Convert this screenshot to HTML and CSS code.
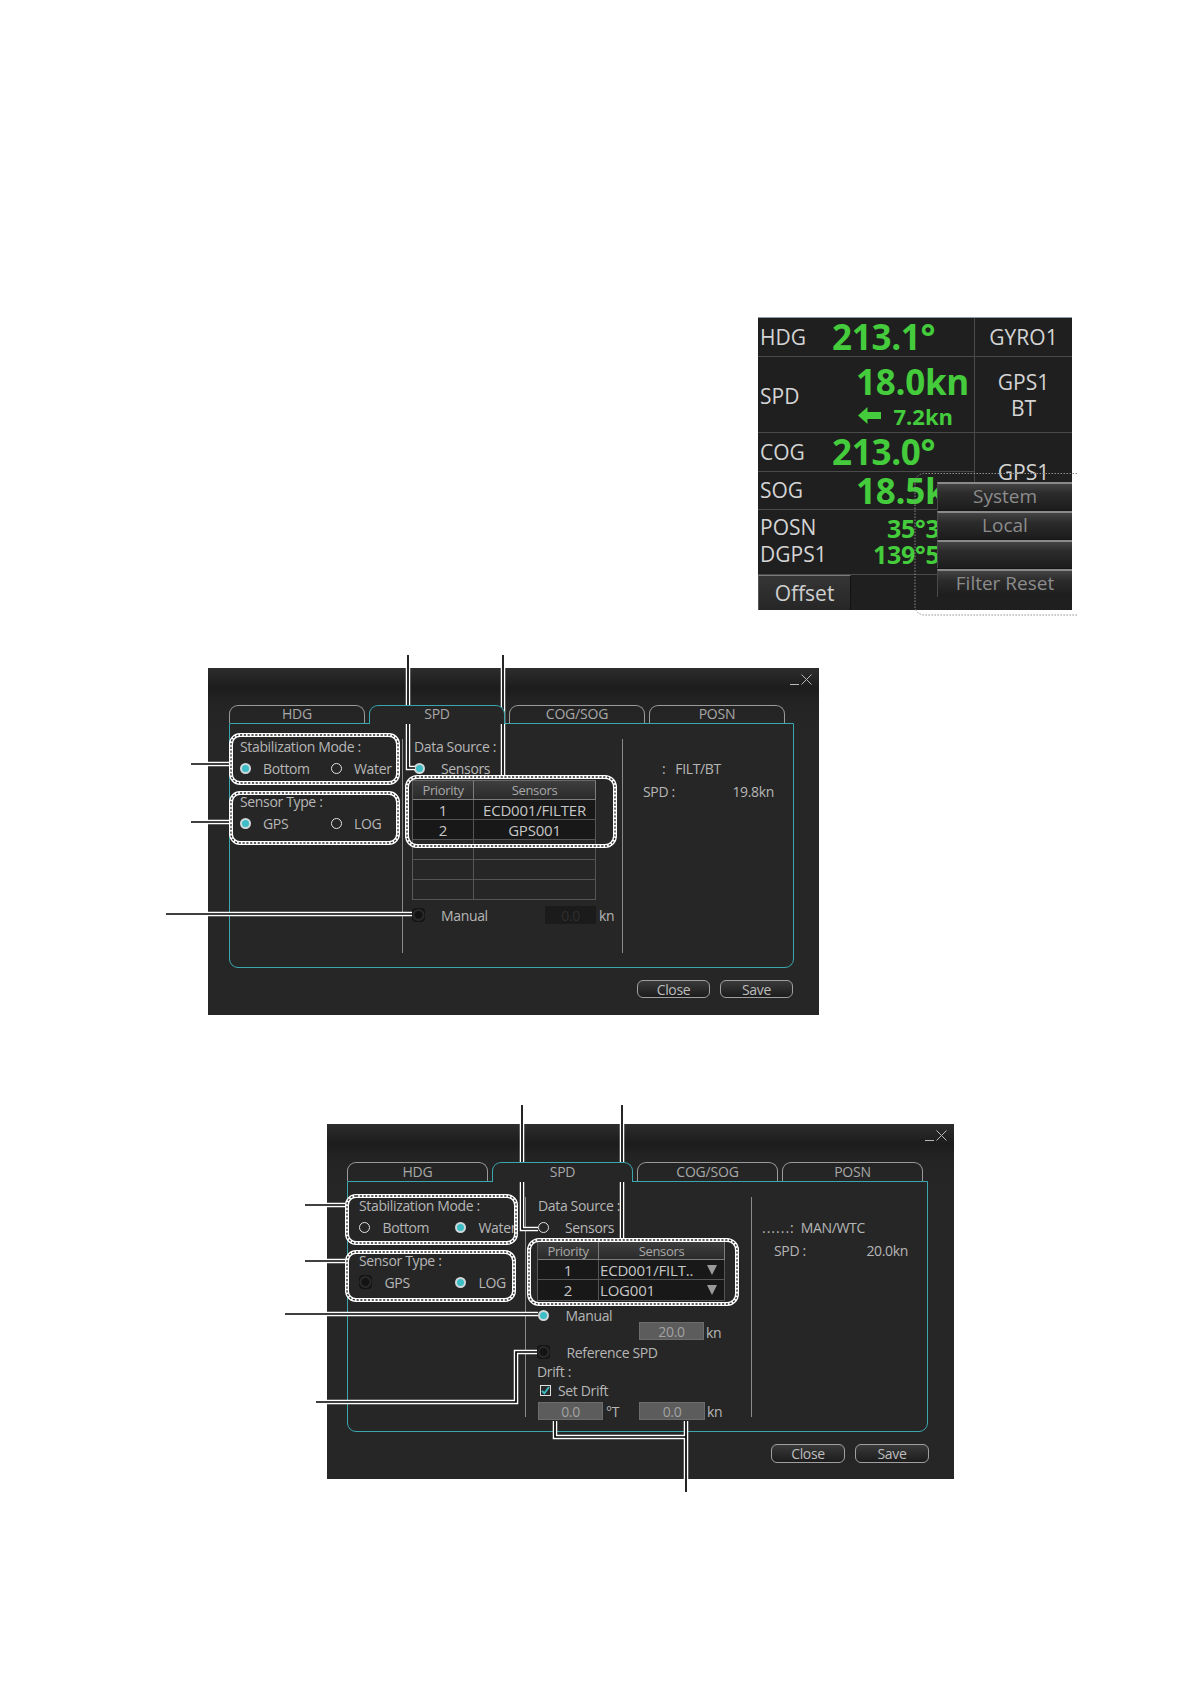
FILE: index.html
```html
<!DOCTYPE html>
<html lang="en">
<head>
<meta charset="utf-8">
<title>SPD settings</title>
<link rel="stylesheet" href="styles.css">
</head>
<body>
<div class="page">

  <div class="nav">
    <div class="c l hdg"><span class="k">HDG</span><span class="big">213.1°</span></div>
    <div class="c src">GYRO1</div>
    <div class="c l spd"><span class="k">SPD</span>
      <div class="vals"><span class="big">18.0kn</span>
        <span class="small"><svg class="arr" width="23" height="17" viewBox="0 0 23 17"><path d="M0 8.5 L9.5 0 L9.5 5 L23 5 L23 12 L9.5 12 L9.5 17 Z" fill="#44cc3c"/></svg>7.2kn</span>
      </div>
    </div>
    <div class="c src two">GPS1<br>BT</div>
    <div class="c l cog"><span class="k">COG</span><span class="big">213.0°</span></div>
    <div class="c src span2">GPS1</div>
    <div class="c l sog"><span class="k">SOG</span><span class="big">18.5kn</span></div>
    <div class="c l posn">
      <div class="ks"><span>POSN</span><span>DGPS1</span></div>
      <div class="pv"><span class="lat">35°35.1</span><span class="lon">139°59.4</span></div>
    </div>
    <div class="c src"></div>
    <div class="c off"><span class="offbtn">Offset</span></div>
    <div class="c off2"></div>
  </div>

  <div class="menu">
    <div class="mi">System</div>
    <div class="mi">Local</div>
    <div class="mi"></div>
    <div class="mi">Filter Reset</div>
  </div>

  <section class="dlg d1">
    <div class="bar"><span class="winctl"><span class="us"></span><svg width="11" height="11" viewBox="0 0 11 11"><path d="M0.5 0.5 L10.5 10.5 M10.5 0.5 L0.5 10.5" stroke="#b8b8b8" stroke-width="1"/></svg></span></div>
    <div class="tabs">
      <div class="tab">HDG</div>
      <div class="tab on">SPD</div>
      <div class="tab">COG/SOG</div>
      <div class="tab">POSN</div>
    </div>
    <div class="panel">
      <div class="col left">
        <div class="grp">
          <div class="ttl">Stabilization Mode :</div>
          <div class="opts"><span class="opt"><i class="rb on"></i>Bottom</span><span class="opt"><i class="rb"></i>Water</span></div>
        </div>
        <div class="grp">
          <div class="ttl">Sensor Type :</div>
          <div class="opts"><span class="opt"><i class="rb on"></i>GPS</span><span class="opt"><i class="rb"></i>LOG</span></div>
        </div>
      </div>
      <div class="col mid">
        <div class="ttl">Data Source :</div>
        <div class="opts"><span class="opt wide"><i class="rb on"></i>Sensors</span></div>
        <div class="tbl">
          <div class="th">Priority</div><div class="th">Sensors</div>
          <div class="td">1</div><div class="td">ECD001/FILTER</div>
          <div class="td">2</div><div class="td">GPS001</div>
          <div class="te"></div><div class="te"></div>
          <div class="te"></div><div class="te"></div>
          <div class="te"></div><div class="te"></div>
        </div>
        <div class="manual"><i class="rb dis"></i><span class="mlbl">Manual</span><span class="inp dark">0.0</span><span class="unit">kn</span></div>
      </div>
      <div class="col right">
        <div class="info r1"><span>:</span><span class="v">FILT/BT</span></div>
        <div class="info r2"><span>SPD :</span><span>19.8kn</span></div>
      </div>
    </div>
    <div class="btns"><span class="btn">Close</span><span class="btn">Save</span></div>
  </section>

  <section class="dlg d2">
    <div class="bar"><span class="winctl"><span class="us"></span><svg width="11" height="11" viewBox="0 0 11 11"><path d="M0.5 0.5 L10.5 10.5 M10.5 0.5 L0.5 10.5" stroke="#b8b8b8" stroke-width="1"/></svg></span></div>
    <div class="tabs">
      <div class="tab">HDG</div>
      <div class="tab on">SPD</div>
      <div class="tab">COG/SOG</div>
      <div class="tab">POSN</div>
    </div>
    <div class="panel">
      <div class="col left">
        <div class="grp">
          <div class="ttl">Stabilization Mode :</div>
          <div class="opts"><span class="opt"><i class="rb"></i>Bottom</span><span class="opt"><i class="rb on"></i>Water</span></div>
        </div>
        <div class="grp">
          <div class="ttl">Sensor Type :</div>
          <div class="opts"><span class="opt"><i class="rb dis"></i>GPS</span><span class="opt"><i class="rb on"></i>LOG</span></div>
        </div>
      </div>
      <div class="col mid">
        <div class="ttl">Data Source :</div>
        <div class="opts"><span class="opt wide"><i class="rb"></i>Sensors</span></div>
        <div class="tbl">
          <div class="th">Priority</div><div class="th">Sensors</div>
          <div class="td">1</div><div class="td sel"><span>ECD001/FILT..</span><i class="tri"></i></div>
          <div class="td">2</div><div class="td sel"><span>LOG001</span><i class="tri"></i></div>
        </div>
        <div class="manual"><i class="rb on"></i><span class="mlbl">Manual</span></div>
        <div class="spdrow"><span class="inp gray w65">20.0</span><span class="unit">kn</span></div>
        <div class="manual ref"><i class="rb dis"></i><span class="mlbl">Reference SPD</span></div>
        <div class="drift">Drift :</div>
        <div class="setdrift"><span class="cb"><svg width="9" height="9" viewBox="0 0 9 9"><path d="M1 4.8 L3.4 7.4 L8 1" stroke="#3dbdc6" stroke-width="1.8" fill="none"/></svg></span>Set Drift</div>
        <div class="driftvals"><span class="inp gray w65">0.0</span><span class="deg">°T</span><span class="inp gray w66">0.0</span><span class="unit">kn</span></div>
      </div>
      <div class="col right">
        <div class="info r1"><span class="dots">......:</span><span class="v">MAN/WTC</span></div>
        <div class="info r2"><span>SPD :</span><span>20.0kn</span></div>
      </div>
    </div>
    <div class="btns"><span class="btn">Close</span><span class="btn">Save</span></div>
  </section>

  <svg class="annot" width="1190" height="1684" viewBox="0 0 1190 1684">
    <path class="obox" d="M1077 473.5 H924 A9 9 0 0 0 915 482.5 V606 A9 9 0 0 0 924 615 H1077"/>
    <g class="dbox">
      <rect x="231" y="735" width="167" height="48" rx="9"/>
      <rect x="231" y="793" width="167" height="50" rx="9"/>
      <rect x="407" y="777" width="208" height="69" rx="10"/>
      <rect x="347" y="1196" width="169" height="47" rx="9"/>
      <rect x="347" y="1252" width="167" height="48" rx="9"/>
      <rect x="529" y="1240" width="208" height="64" rx="10"/>
    </g>
    <g class="dash">
      <rect x="231" y="735" width="167" height="48" rx="9"/>
      <rect x="231" y="793" width="167" height="50" rx="9"/>
      <rect x="407" y="777" width="208" height="69" rx="10"/>
      <rect x="347" y="1196" width="169" height="47" rx="9"/>
      <rect x="347" y="1252" width="167" height="48" rx="9"/>
      <rect x="529" y="1240" width="208" height="64" rx="10"/>
    </g>
    <g class="halo">
      <path d="M408 655 V768 H415"/>
      <path d="M503 655 V775"/>
      <path d="M191 764 H229"/>
      <path d="M191 822 H229"/>
      <path d="M166 914 H412"/>
      <path d="M522 1105 V1229 H538"/>
      <path d="M622 1105 V1238"/>
      <path d="M305 1205 H345"/>
      <path d="M305 1261 H345"/>
      <path d="M285 1314 H538"/>
      <path d="M316 1402 H516 V1352 H537"/>
      <path d="M555 1421 V1437 H686 M686 1421 V1492"/>
    </g>
    <g class="core">
      <path d="M408 655 V768 H415"/>
      <path d="M503 655 V775"/>
      <path d="M191 764 H229"/>
      <path d="M191 822 H229"/>
      <path d="M166 914 H412"/>
      <path d="M522 1105 V1229 H538"/>
      <path d="M622 1105 V1238"/>
      <path d="M305 1205 H345"/>
      <path d="M305 1261 H345"/>
      <path d="M285 1314 H538"/>
      <path d="M316 1402 H516 V1352 H537"/>
      <path d="M555 1421 V1437 H686 M686 1421 V1492"/>
    </g>
  </svg>
</div>
</body>
</html>
```

FILE: styles.css
```css
* { box-sizing: border-box; margin: 0; padding: 0; }
html, body { background: #fff; }
body { font-family: "Open Sans", "Liberation Sans", sans-serif; }

.page { position: relative; width: 1190px; height: 1684px; overflow: hidden; padding-top: 317px; }

/* ---------- top navigation panel ---------- */
.nav {
  margin-left: 758px;
  width: 314px;
  height: 293px;
  background: #1f1f1f;
  border-top: 1px solid #8d9cab;
  display: grid;
  grid-template-columns: 217px 97px;
  grid-template-rows: 39px 76px 39px 38px 65px 35px;
  color: #d4d4d4;
  font-size: 21px;
}
.c { border-bottom: 1px solid #4a4a4a; }
.c.l { border-right: 1px solid #4a4a4a; }
.k { line-height: 1; }
.big { font-weight: 700; color: #44cc3c; font-size: 35px; line-height: 36px; letter-spacing: -0.3px; }
.hdg, .cog { display: flex; align-items: center; padding-left: 2px; }
.hdg .k, .cog .k { width: 72px; flex: none; }
.spd, .sog { display: flex; align-items: center; justify-content: space-between; padding: 0 5px 0 2px; }
.spd .k { margin-top: 4px; }
.vals { display: flex; flex-direction: column; align-items: flex-end; }
.spd .big { margin-top: 2px; }
.small { display: flex; align-items: center; margin: 4px 16px 0 0; color: #44cc3c; font-weight: 700; font-size: 22px; line-height: 24px; }
.arr { margin-right: 12px; flex: none; }
.src { display: flex; align-items: center; justify-content: center; text-align: center; font-size: 21px; line-height: 26px; }
.src.two { padding-top: 0; }
.span2 { grid-row: span 2; align-items: flex-start; padding-top: 26px; }
.posn { display: flex; padding-left: 2px; overflow: hidden; }
.ks { display: flex; flex-direction: column; flex: none; width: 113px; padding-top: 4px; line-height: 27px; }
.pv { display: flex; flex-direction: column; flex: none; padding-top: 5px; white-space: nowrap; }
.pv span { font-weight: 700; color: #44cc3c; font-size: 25px; line-height: 26px; letter-spacing: -0.3px; }
.pv .lat { padding-left: 14px; }
.off, .off2 { border-bottom: 0; }
.offbtn {
  display: flex; align-items: center; justify-content: center;
  width: 93px; height: 100%;
  background: linear-gradient(#353535, #262626);
  border-top: 1px solid #7a7a7a; border-left: 1px solid #555; border-right: 1px solid #111;
  color: #cfcfcf; font-size: 21px;
}

.menu {
  position: absolute; left: 937px; top: 482px; width: 135px;
  display: flex; flex-direction: column; gap: 1px;
  background: #161616;
}
.mi {
  height: 28px;
  background: linear-gradient(#444 0, #2c2c2c 35%, #1c1c1c 100%);
  border-top: 2px solid #8a8a8a;
  border-left: 1px solid #4a4a4a;
  color: #8c8c8c; font-size: 19px; line-height: 25px; text-align: center;
}

/* ---------- dialogs ---------- */
.dlg {
  background: linear-gradient(#2d2d2d 0, #1c1c1c 20px, #232323 32px, #262626 60px);
  color: #b6b6b6;
  font-size: 14px;
  letter-spacing: -0.35px;
  display: flex; flex-direction: column;
}
.d1 { margin: 58px 0 0 208px; width: 611px; height: 347px; }
.d2 { margin: 109px 0 0 327px; width: 627px; height: 355px; }

.bar { display: flex; justify-content: flex-end; padding: 4px 7px 0 0; }
.d1 .bar { height: 37px; }
.d2 .bar { height: 38px; }
.winctl { display: flex; align-items: flex-end; gap: 2px; height: 13px; }
.us { width: 9px; height: 1px; background: #b8b8b8; }

.tabs { display: flex; gap: 4px; position: relative; z-index: 1; }
.d1 .tabs { margin-left: 21px; height: 18px; }
.d2 .tabs { margin-left: 20px; height: 19px; }
.tab {
  border: 1px solid #9a9a9a; border-bottom: 0; border-radius: 9px 9px 0 0;
  text-align: center; color: #a8a8a8; font-size: 14px; letter-spacing: -0.2px;
  line-height: 16px; height: 100%;
}
.d1 .tab { width: 136px; }
.d2 .tab { width: 141px; line-height: 17px; }
.tab.on { border-color: #3ba6ae; background: #262626; height: calc(100% + 1px); }

.panel {
  border: 1px solid #3ba6ae; border-radius: 0 0 9px 9px;
  display: grid;
}
.d1 .panel { margin-left: 21px; width: 565px; height: 245px; grid-template-columns: 172px 220px 1fr; }
.d2 .panel { margin-left: 20px; width: 581px; height: 251px; grid-template-columns: 177px 226px 1fr; }

.col { position: relative; }
.col.mid::before, .col.right::before {
  content: ""; position: absolute; left: 0; top: 15px; bottom: 14px; width: 1px; background: #8a8a8a;
}
.d1 .left { padding: 14px 0 0 10px; }
.d2 .left { padding: 15px 0 0 11px; }
.grp + .grp { margin-top: 14px; }
.ttl { line-height: 18px; height: 18px; white-space: nowrap; }
.opts { display: flex; align-items: center; height: 22px; margin-top: 1px; white-space: nowrap; }
.opt { display: flex; align-items: center; }
.opt .rb { margin-right: 12px; }
.d1 .left .opt:first-child { width: 91px; }
.d2 .left .opt:first-child { width: 96px; }
.d2 .left .opt .rb { margin-right: 12.5px; }
.opt.wide .rb { margin-right: 16px; }

.rb { display: inline-block; width: 11px; height: 11px; border-radius: 50%; border: 1.5px solid #e4e4e4; flex: none; }
.rb.on { background: #3dbdc6; border: 2px solid #cfd8da; }
.rb.dis {
  width: 13px; height: 14px; border-radius: 4px; border: 0;
  background: radial-gradient(circle at 50% 50%, #131313 0 3.5px, #292929 4.5px 5.5px, #131313 6.5px);
}

.d1 .mid { padding: 14px 0 0 12px; }
.d2 .mid { padding: 15px 0 0 13px; }

.tbl { display: grid; border-left: 1px solid #5a5a5a; border-top: 1px solid #6a6a6a; }
.d1 .tbl { margin: 1px 0 0 -2px; width: 184px; grid-template-columns: 61px 122px; grid-template-rows: 19px repeat(5, 20px); }
.d2 .tbl { margin: 3px 0 0 -1px; width: 188px; grid-template-columns: 61px 126px; grid-template-rows: 18px 20px 21px; }
.tbl > div { border-right: 1px solid #555; border-bottom: 1px solid #555; display: flex; align-items: center; justify-content: center; white-space: nowrap; }
.th { background: linear-gradient(#3e3e3e, #2b2b2b); color: #a8a8a8; font-size: 13px; border-color: #7c7c7c !important; }
.td { background: #181818; color: #c6c6c6; font-size: 15px; letter-spacing: -0.2px; }
.td.sel { justify-content: space-between; padding: 0 7px 0 1px; }
.tri { width: 0; height: 0; border-left: 5.5px solid transparent; border-right: 5.5px solid transparent; border-top: 10px solid #9a9a9a; }

.manual { display: flex; align-items: center; height: 22px; white-space: nowrap; }
.d1 .manual { margin: 4px 0 0 -2px; }
.d1 .mlbl { margin-left: 16px; width: 104px; }
.d2 .manual { margin-top: 4px; height: 20px; }
.d2 .manual .rb.on { margin-right: 16.5px; }
.d2 .manual.ref { margin: 2px 0 0 -1px; }
.d2 .manual.ref .rb { margin-right: 16.5px; }
.inp { display: inline-flex; align-items: center; justify-content: center; height: 18px; font-size: 14px; }
.inp.dark { width: 51px; background: #1b1b1b; color: #2e2e2e; }
.inp.gray { background: #5c5c5c; color: #a2a2a2; border: 1px solid #6c6c6c; }
.w65 { width: 65px; }
.w66 { width: 66px; }
.unit { margin-left: 3px; }
.spdrow { display: flex; align-items: flex-end; margin: -3px 0 0 101px; height: 18px; }
.spdrow .unit { line-height: 14px; margin-left: 2px; }
.drift { margin: 1px 0 0 -1px; line-height: 18px; }
.setdrift { display: flex; align-items: center; height: 18px; margin-left: 2px; }
.cb { width: 11px; height: 11px; border: 1px solid #e0e0e0; background: #2a2a2a; display: flex; align-items: center; justify-content: center; margin-right: 7px; }
.driftvals { display: flex; align-items: flex-end; height: 18px; margin-top: 3px; }
.deg { margin: 0 20px 0 3px; line-height: 16px; }
.driftvals .unit { margin-left: 2px; line-height: 16px; }

.info { display: flex; line-height: 20px; white-space: nowrap; }
.d1 .right { padding-top: 35px; }
.d2 .right { padding-top: 36px; }
.info.r2 { margin-top: 3px; justify-content: space-between; }
.d1 .r1 { padding-left: 40px; }
.d1 .r1 .v { margin-left: 10px; }
.d1 .r2 { padding: 0 19px 0 21px; }
.d2 .r1 { padding-left: 11px; }
.d2 .r1 .v { margin-left: 6px; }
.dots { letter-spacing: 1px; }
.d2 .r2 { padding: 0 19px 0 23px; }

.btns { display: flex; justify-content: flex-end; gap: 10px; margin-top: 12px; }
.d1 .btns { padding-right: 26px; }
.d2 .btns { padding-right: 25px; }
.btn {
  height: 18px; border: 1px solid #a0a0a0; border-radius: 6px;
  background: linear-gradient(#3a3a3a, #1c1c1c);
  color: #bdbdbd; display: flex; align-items: center; justify-content: center; font-size: 14px;
}
.d1 .btn { width: 73px; }
.d2 .btn { width: 74px; height: 19px; }

/* ---------- annotation overlay ---------- */
.annot { position: absolute; left: 0; top: 0; pointer-events: none; }
.obox { fill: none; stroke: #8e8e8e; stroke-width: 1; stroke-dasharray: 1.5 1.5; }
.dbox rect { fill: none; stroke: #fff; stroke-width: 4; }
.dash rect { fill: none; stroke: #2a2a2a; stroke-width: 1.3; stroke-dasharray: 2.2 1.6; }
.halo path { fill: none; stroke: #fff; stroke-width: 4.5; }
.core path { fill: none; stroke: #000; stroke-width: 1.7; }
```
